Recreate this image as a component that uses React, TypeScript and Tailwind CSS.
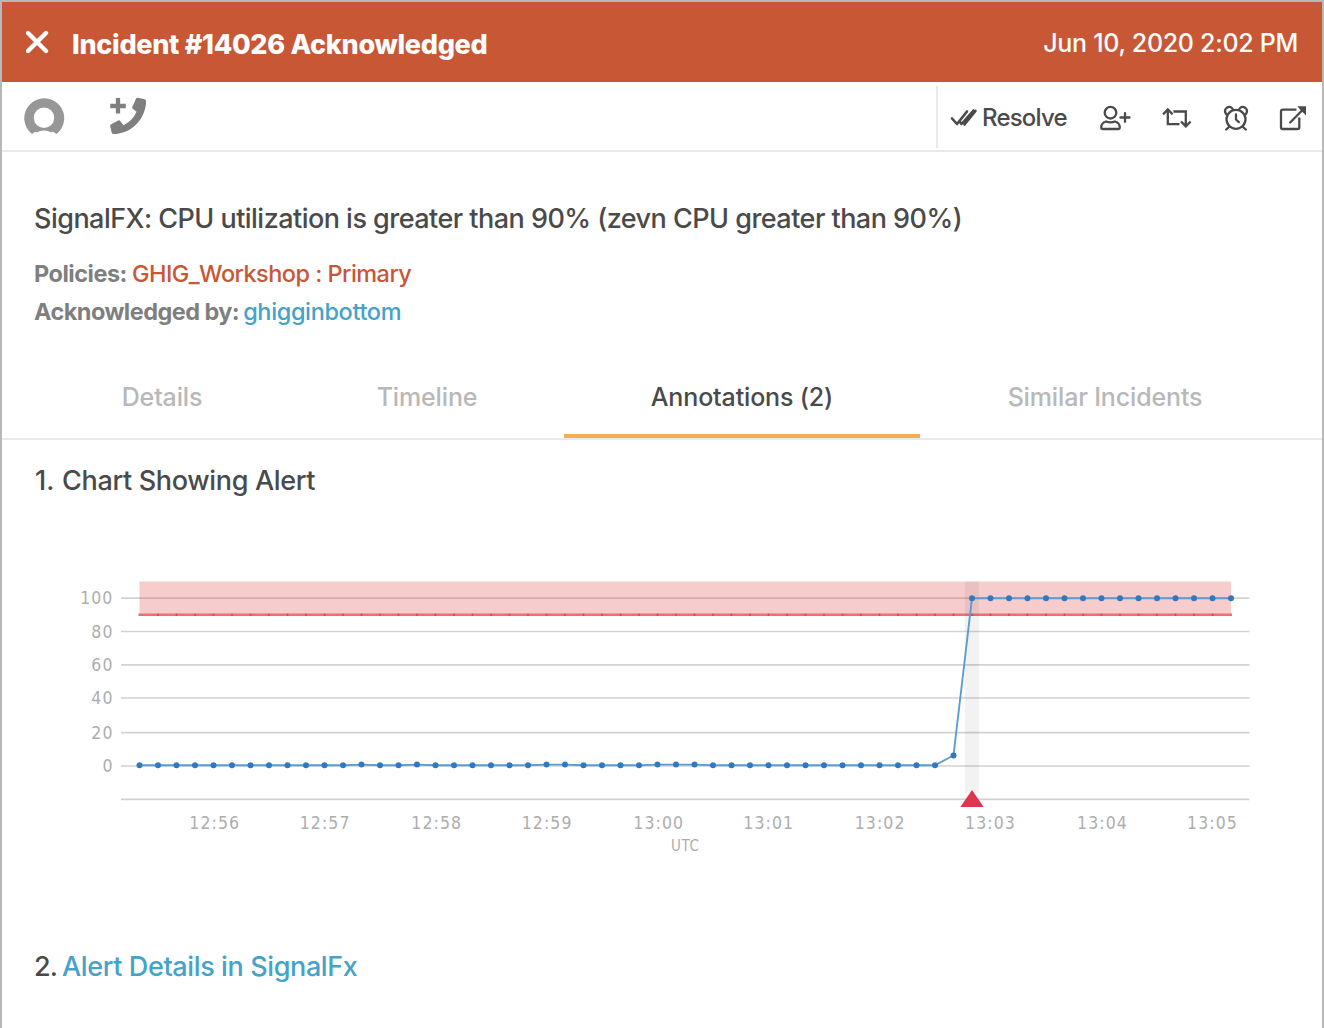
import React from "react";

const STEP = 18.5;
const START = 139.5;
const levels = Array.from({ length: 60 }, (_, i) => {
  if (i >= 45) return 598.2;
  if (i === 44) return 755.5;
  return [12, 15, 22, 23, 28, 29, 30].includes(i) ? 764.6 : 765.2;
});
const points = levels.map((y, i) => ({ x: START + i * STEP, y }));
const gridRows = [
  { y: 598.2, label: "100" },
  { y: 631.5, label: "80" },
  { y: 664.8, label: "60" },
  { y: 698, label: "40" },
  { y: 732.7, label: "20" },
  { y: 766, label: "0" },
  { y: 799.3, label: "" },
];
const times = [
  { x: 214.3, t: "12:56" },
  { x: 324.6, t: "12:57" },
  { x: 436.3, t: "12:58" },
  { x: 546.6, t: "12:59" },
  { x: 658.3, t: "13:00" },
  { x: 768.3, t: "13:01" },
  { x: 879.6, t: "13:02" },
  { x: 990, t: "13:03" },
  { x: 1102, t: "13:04" },
  { x: 1212, t: "13:05" },
];

const labelStyle = {
  fill: "#adadad",
  fontFamily: "'DejaVu Sans Condensed', 'DejaVu Sans', sans-serif",
  fontStretch: "condensed",
} as const;

function Chart() {
  return (
    <svg className="block" width="1320" height="300" viewBox="2 570 1320 300">
      {gridRows.map((r) => (
        <g key={r.y}>
          <line x1="121" x2="1249.5" y1={r.y} y2={r.y} stroke="#d2d2d2" strokeWidth="1.7" />
          <text x="113.5" y={r.y + 6} textAnchor="end" fontSize="17.5" letterSpacing="1.1" {...labelStyle}>
            {r.label}
          </text>
        </g>
      ))}
      <rect x="139.5" y="581.5" width="1091.5" height="33" fill="#e23b3f" fillOpacity="0.26" />
      <line x1="138.5" x2="1232" y1="614.8" y2="614.8" stroke="#ee6f6f" strokeWidth="2.6" />
      {points.slice(1, -1).map((p) => (
        <rect key={p.x} x={p.x - 0.75} y="613.8" width="1.5" height="2" fill="#e33a3c" />
      ))}
      <rect x="964.7" y="581.5" width="14.3" height="212" fill="#000" fillOpacity="0.05" />
      <polyline points={points.map((p) => `${p.x},${p.y}`).join(" ")} fill="none" stroke="#5b9dd0" strokeWidth="1.9" />
      {points.map((p) => (
        <circle key={p.x} cx={p.x} cy={p.y} r="3" fill="#3278bf" />
      ))}
      <path d="M972 790l11.700 17h-23.400z" fill="#dc3650" />
      {times.map((m) => (
        <text key={m.t} x={m.x + 0.5} y="829" textAnchor="middle" fontSize="17.5" letterSpacing="1.1" {...labelStyle}>
          {m.t}
        </text>
      ))}
      <text x="685.3" y="850.5" textAnchor="middle" fontSize="15" letterSpacing="0.6" {...labelStyle}>
        UTC
      </text>
    </svg>
  );
}

const icon = { fill: "none", stroke: "#4a4a4a", strokeWidth: 2.3, strokeLinecap: "round", strokeLinejoin: "round" } as const;

function Header() {
  return (
    <header className="flex h-20 items-center bg-[#c85735] px-6 text-white">
      <svg className="mr-[22px] shrink-0" width="24" height="24" viewBox="26 30 24 24">
        <path d="M28 33l18 18M46 33L28 51" fill="none" stroke="#fff" strokeWidth="4.4" strokeLinecap="round" />
      </svg>
      <h1 className="mt-1.5 text-[27px] leading-8 font-extrabold tracking-[-0.3px]">Incident #14026 Acknowledged</h1>
      <time className="mt-0.5 ml-auto text-[25px] leading-8 tracking-[-0.3px]">Jun 10, 2020 2:02 PM</time>
    </header>
  );
}

function Toolbar() {
  return (
    <div className="flex h-[70px] border-b-2 border-[#e9e9e9]">
      <svg className="ml-[18px] shrink-0" width="132" height="68" viewBox="20 82 132 68">
        <path d="M32 134A20 20 0 1 1 56.500 134Q54.500 132.500 51 131Q44 127.500 37 131Q34 132.500 32 134Z" fill="#979797" />
        <circle cx="44" cy="117.800" r="10.200" fill="#fff" />
        <path d="M36 131.800Q44 127.400 52 131.800" fill="none" stroke="#979797" strokeWidth="1.600" />
        <path d="M118 98v15.500M110.200 106h15.600" stroke="#7f7f7f" strokeWidth="4.300" strokeLinejoin="round" />
        <path d="M136.200 98.200Q136.800 97.500 138 97.800L144.500 99.200Q146.200 99.600 146.100 101.500C145.400 120 131 133.800 113.500 134.100Q112 134.100 111.700 132.700L110.200 126.200Q110 124.800 111.200 124.200L118.200 120.500Q119.300 119.900 120.200 120.900L123.500 125.300C129.500 122.300 133.800 118 136.600 111.800L132.700 108.800Q131.800 108 132.300 106.900Z" fill="#7f7f7f" />
      </svg>
      <div className="mt-1 mb-0.5 ml-auto flex w-[386px] items-center border-l-2 border-[#e9e9e9] pt-0.5">
        <svg className="ml-3 shrink-0" width="28" height="24" viewBox="950 106 28 24">
          <path d="M952 118.500l5 5.500 10-12.500M960 122l1.500 2 12-13.500M964.500 124.500l11-13.500" {...icon} strokeWidth={2.600} />
        </svg>
        <span className="ml-1 w-[85px] text-[24px] leading-8 tracking-[-0.8px] whitespace-nowrap">Resolve</span>
        <svg className="ml-8 shrink-0" width="32" height="30" viewBox="1099 103 32 30">
          <circle cx="1110.500" cy="112.700" r="5.800" {...icon} />
          <path d="M1106 121.500Q1101.200 123 1101.200 127.500V127.800Q1101.200 129 1102.500 129H1118.500Q1119.800 129 1119.800 127.800V127.500Q1119.800 123 1115 121.500Q1110.500 123.300 1106 121.500ZM1125 113.200v8.600M1120.500 117.500h9" {...icon} />
        </svg>
        <svg className="ml-[31px] shrink-0" width="30" height="30" viewBox="1162 103 30 30">
          <path d="M1167.800 110.200v14h10.500M1163.800 113.500l4-4 4 4M1174.500 111.500h11.300v14.500M1181.800 122.300l4 4 4-4" {...icon} strokeLinecap="square" strokeLinejoin="miter" strokeWidth={2.300} />
        </svg>
        <svg className="ml-[31px] shrink-0" width="26" height="30" viewBox="1223 103 26 30">
          <circle cx="1236" cy="119.300" r="9.500" {...icon} />
          <path d="M1236 114.500v5l2.800 2.600M1229.500 126.500l-3.300 3M1242.500 126.500l3.300 3M1226.200 114.200Q1223.700 110.500 1226.500 108Q1230.500 105.200 1232.800 109.300M1245.800 114.200Q1248.300 110.500 1245.500 108Q1241.500 105.200 1239.200 109.300" {...icon} />
        </svg>
        <svg className="ml-[30px] shrink-0" width="30" height="30" viewBox="1279 103 30 30">
          <path d="M1295.500 109.700H1282.800Q1281 109.700 1281 111.500V127.200Q1281 129 1282.800 129H1297.500Q1299.300 129 1299.300 127.200V118.500M1290.200 122.500L1303 109.500" {...icon} />
          <path d="M1297.500 106.200h8.500v9.200l-3-3-3.600-3.600z" fill="#4a4a4a" />
        </svg>
      </div>
    </div>
  );
}

function Tabs() {
  return (
    <nav className="mt-[26px] flex h-[84px] border-b-2 border-[#e9e9e9] text-[25px] leading-8 tracking-[-0.15px] whitespace-nowrap text-[#b8b8b8]">
      <div className="flex w-[320px] justify-center pt-[25px]">Details</div>
      <div className="flex w-[210px] justify-center pt-[25px]">Timeline</div>
      <div className="mx-8 flex w-[356px] justify-center border-b-4 border-[#f2ae55] pt-[25px] text-[#4a4a4a]">Annotations (2)</div>
      <div className="flex w-[306px] justify-center pt-[25px]">Similar Incidents</div>
    </nav>
  );
}

export default function App() {
  return (
    <div className="flex h-[1028px] w-[1324px] flex-col overflow-hidden border-x-2 border-t-2 border-[#b8b8b8] bg-white font-['Inter',sans-serif] font-[450] text-[#4a4a4a]">
      <Header />
      <Toolbar />
      <section className="h-[178px] px-8 pt-[49px] whitespace-nowrap">
        <h2 className="text-[27px] leading-9 font-[450] tracking-[-0.53px]">SignalFX: CPU utilization is greater than 90% (zevn CPU greater than 90%)</h2>
        <div className="mt-[18px] flex gap-[5px] text-[23.5px] leading-[38px]">
          <b className="font-bold tracking-[-0.5px] text-[#7f7f7f]">Policies:</b>
          <span className="tracking-[-0.54px] text-[#c85735]">GHIG_Workshop : Primary</span>
        </div>
        <div className="flex gap-1 text-[23.5px] leading-[38px]">
          <b className="font-bold tracking-[-0.55px] text-[#7f7f7f]">Acknowledged by:</b>
          <span className="tracking-[-0.36px] text-[#45a2c8]">ghigginbottom</span>
        </div>
      </section>
      <Tabs />
      <main>
        <h3 className="mt-[23px] flex pl-[33px] text-[27px] leading-9 font-[450]">
          <span className="w-[27px]">1.</span>
          <span className="tracking-[-0.33px]">Chart Showing Alert</span>
        </h3>
        <div className="mt-[71px]">
          <Chart />
        </div>
        <h3 className="mt-[79px] flex pl-8 text-[27px] leading-9 font-[450]">
          <span className="w-7 tracking-[-0.8px]">2.</span>
          <a className="tracking-[-0.38px] text-[#45a2c8]">Alert Details in SignalFx</a>
        </h3>
      </main>
    </div>
  );
}
